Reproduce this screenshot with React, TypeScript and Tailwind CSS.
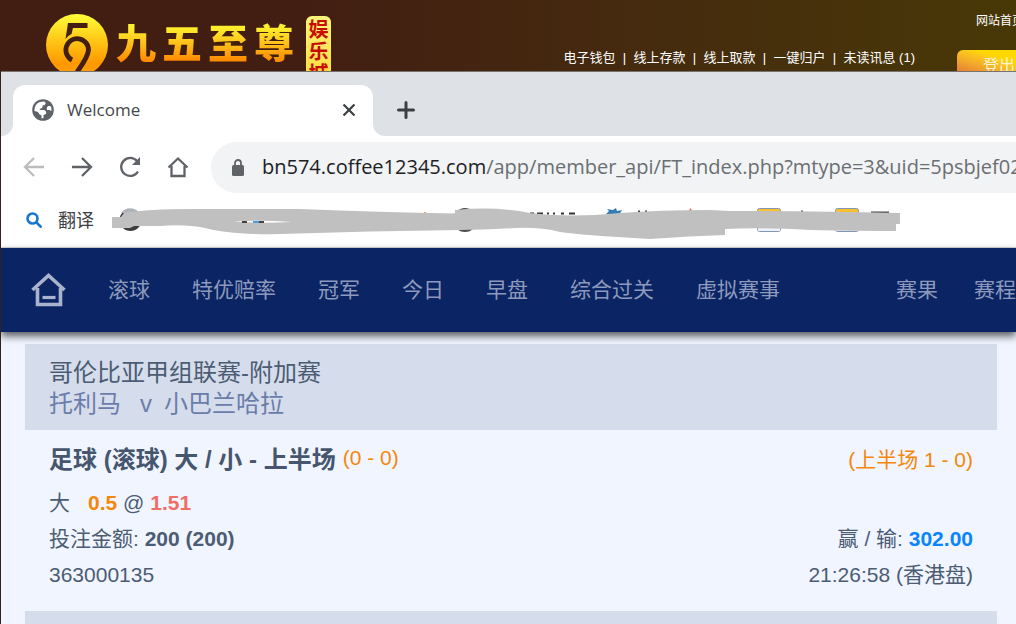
import type { ReactNode } from 'react';

const accountLinks = ['电子钱包', '线上存款', '线上取款', '一键归户', '未读讯息 (1)'];
const navLinks = ['滚球', '特优赔率', '冠军', '今日', '早盘', '综合过关', '虚拟赛事'];
const resultLinks = ['赛果', '赛程'];

const CJK = "font-['Liberation_Sans','Noto_Sans_CJK_SC',sans-serif]";
const CHROME = "font-['Open_Sans','Noto_Sans_CJK_SC',sans-serif]";

function Logo() {
	return (
		<div className="flex shrink-0 items-start pt-[14px] pl-[46px]">
			<svg className="h-[62px] w-[62px]" viewBox="0 0 62 62" aria-hidden="true">
				<defs>
					<linearGradient id="gold" x1="0" y1="0" x2="0" y2="1">
						<stop offset="0" stopColor="#ffff38" />
						<stop offset="0.45" stopColor="#ffc414" />
						<stop offset="0.8" stopColor="#ff9800" />
						<stop offset="1" stopColor="#ffa010" />
					</linearGradient>
				</defs>
				<circle cx="31" cy="31" r="31" fill="url(#gold)" />
				<path d="M41.500 9V14H27L25.500 20Q22 21.500 19.500 25L22 9Z" fill="#421f12" />
				<path d="M26 46A11.300 11.300 0 1 1 42.500 36Q42 43 31 58" fill="none" stroke="#421f12" strokeWidth="4.800" />
			</svg>
			<div className="mt-[2px] ml-2 flex gap-[6px] text-[40px] leading-[56px] font-black">
				{'九五至尊'.split('').map((char) => (
					<span key={char} className="bg-linear-to-b from-[#fff02c] from-20% to-[#ff8a00] to-80% bg-clip-text text-transparent">
						{char}
					</span>
				))}
			</div>
			<div className="mt-[2px] ml-3 flex w-[25px] flex-col items-center rounded-t-md bg-linear-to-b from-[#fff47a] to-[#ffd92e] pt-[3px] text-[20px] leading-[22px] font-bold text-[#c80d00]">
				{'娱乐城'.split('').map((char) => (
					<span key={char}>{char}</span>
				))}
			</div>
		</div>
	);
}

function SiteHeader() {
	return (
		<header className="flex h-[71px] shrink-0 justify-between overflow-hidden bg-linear-to-r from-[#421e12] from-30% to-[#483806] text-white">
			<Logo />
			<div className="-mr-[42px] flex shrink-0 flex-col items-end">
				<a href="#home" className="mt-[13px] mr-[34px] text-[12px] leading-4">网站首页</a>
				<div className="mt-[21px] flex items-start">
					<nav className="flex text-[13px] leading-4">
						{accountLinks.map((link, i) => (
							<span key={link} className="flex">
								{i > 0 && <span className="w-[18px] text-center">|</span>}
								<a href="#account">{link}</a>
							</span>
						))}
					</nav>
					<button className="ml-[42px] h-8 w-[101px] rounded-t-md bg-linear-to-tr from-[#d85a38] to-[#ffd800] to-60% pl-[26px] text-left text-[16px] leading-7 text-[#fff3d8]">
						登出
					</button>
				</div>
			</div>
		</header>
	);
}

function TabStrip() {
	return (
		<div className="flex h-16 shrink-0 items-end bg-[#dee1e6]">
			<div className="h-3 w-3 bg-white">
				<div className="h-3 w-3 rounded-br-xl bg-[#dee1e6]" />
			</div>
			<div className="flex h-[51px] w-[360px] items-center rounded-t-xl bg-white pr-[18px] pb-[2px] pl-[19px]">
				<svg className="h-[22px] w-[22px]" viewBox="0 0 22 22" aria-hidden="true">
					<circle cx="11" cy="11" r="10.800" fill="#5f6368" />
					<path d="M2.500 10.500Q3 4.500 8 3L12 2.500Q15 4 12.500 6L10.500 6.500Q11 9 8.500 9.500L7.500 11H12Q15 12 14 15L11.500 16V19L9.500 19.500V16.500L7 15Q7 12.500 2.500 12ZM16 7L18.500 7Q20 9 19.500 12L17.500 11H15Q14 9 16 7Z" fill="#fff" />
				</svg>
				<span className="ml-[13px] flex-1 text-[17px] text-[#45484c]">Welcome</span>
				<button aria-label="Close tab" className="text-[#3c4043]">
					<svg className="h-3 w-3" viewBox="0 0 12 12" stroke="currentColor" strokeWidth="2.200">
						<path d="M0.500 0.500L11.500 11.500M11.500 0.500L0.500 11.500" />
					</svg>
				</button>
			</div>
			<div className="h-3 w-3 bg-white">
				<div className="h-3 w-3 rounded-bl-xl bg-[#dee1e6]" />
			</div>
			<button aria-label="New tab" className="mb-[17px] ml-3 text-[#3c4043]">
				<svg className="h-[18px] w-[18px]" viewBox="0 0 18 18" stroke="currentColor" strokeWidth="3" strokeLinecap="round">
					<path d="M9 1.500V16.500M1.500 9H16.500" />
				</svg>
			</button>
		</div>
	);
}

function ToolButton({ label, children }: { label: string; children: ReactNode }) {
	return (
		<button aria-label={label}>
			<svg className="h-6 w-6" viewBox="0 0 24 24" fill="none" stroke="currentColor" strokeWidth="2.300">
				{children}
			</svg>
		</button>
	);
}

function Toolbar() {
	return (
		<div className="flex h-[60px] shrink-0 items-center gap-6 overflow-hidden pt-[2px] pl-[21px] text-[#5f6368]">
			<span className="flex text-[#babcbe]">
				<ToolButton label="Back">
					<path d="M22 12H3M12 3L3 12L12 21" />
				</ToolButton>
			</span>
			<ToolButton label="Forward">
				<path d="M2 12H21M12 3L21 12L12 21" />
			</ToolButton>
			<ToolButton label="Reload">
				<path d="M20 16.500A9 9 0 1 1 19 6" />
				<path d="M22 2V10H14Z" fill="currentColor" stroke="none" />
			</ToolButton>
			<ToolButton label="Home">
				<path d="M2.500 12.500L12 3.500L21.500 12.500M5.500 11V21H18.500V11" />
			</ToolButton>
			<label className="-ml-[3px] flex h-[51px] flex-1 items-center rounded-l-full bg-[#f1f3f4] pl-[21px] text-[20px]">
				<svg className="h-[17px] w-3 shrink-0" viewBox="0 0 12 17" fill="none" aria-hidden="true">
					<rect y="6" width="12" height="11" rx="1.500" fill="#5f6368" />
					<path d="M3 7V4A3 3 0 0 1 9 4V7" stroke="#5f6368" strokeWidth="1.800" />
				</svg>
				<span className="ml-[18px] text-[#202124]">bn574.coffee12345.com</span>
				<input
					aria-label="Address"
					defaultValue="/app/member_api/FT_index.php?mtype=3&uid=5psbjef02"
					className="min-w-0 flex-1 bg-transparent text-[#6b6f73] outline-none"
				/>
			</label>
		</div>
	);
}

function BookmarksBar() {
	return (
		<div className="flex h-[52px] shrink-0 items-start border-b border-[#d6d8dc] pl-[25px]">
			<a href="#translate" className="flex h-12 items-center gap-4 text-[18px] text-[#3c4043]">
				<svg className="h-4 w-4" viewBox="0 0 16 16" fill="none" stroke="#1a75cf" strokeWidth="2.600" aria-hidden="true">
					<circle cx="6.500" cy="6.500" r="5" />
					<path d="M10 10L15.500 15.500" />
				</svg>
				翻译
			</a>
			<svg className="ml-[18px] h-[52px] w-[790px] shrink-0" viewBox="112 196 790 52" aria-hidden="true">
				<circle cx="130.500" cy="220" r="11" fill="#3d3d3d" />
				<path d="M121 213A11 11 0 0 1 139 213Z" fill="#aeb3b8" />
				<circle cx="465" cy="220" r="12" fill="#4c4c4c" />
				<path d="M530 213.500H534M537 213.500H543M547 213.500H549M553 213.500H555M561 213.500H564M569 213.500H575M638 211.500H640M645 211.500H647" stroke="#333" strokeWidth="2" />
				<path d="M606 214L609 211L607 209L613 210L616 208L617 211L622 210L619 215Z" fill="#347db4" />
				<path d="M688 212L690.500 208L693 212Z" fill="#f16d6d" />
				<rect x="757.500" y="208.500" width="23" height="23" rx="2" fill="#fbc02d" stroke="#8197b8" />
				<rect x="835.500" y="208.500" width="23" height="23" rx="2" fill="#fbc02d" stroke="#8197b8" />
				<path d="M758 228H780V231H758ZM836 228H858V231H836Z" fill="#edf1f8" />
				<path d="M871 212.500H889M801 211.500H803" stroke="#444" strokeWidth="2" />
				<path d="M424 212.500H426" stroke="#e7a13f" />
				<path
					d="M112 217H121L124 213Q150 209 190 209H300Q380 212 455 213.500V210Q495 206 530 213Q570 218 620 213Q660 210 710 210L730 211Q810 211 900 213V224H896V231Q860 231 810 230Q760 227 725 229V235Q690 236 650 239Q580 235 560 232Q540 227 515 228Q480 230 460 230Q370 231 280 234Q230 235 205 228Q185 224 160 226H134L130 228H112Z"
					fill="#c0c0c0"
				/>
				<path d="M234 221.500Q260 220 292 222Q260 223.500 234 221.500Z" fill="#fff" />
				<path d="M242 222H247M259 222H264" stroke="#444" strokeWidth="2" />
				<path d="M253 222H259" stroke="#4d9cd8" strokeWidth="2" />
			</svg>
		</div>
	);
}

function SiteNav() {
	return (
		<nav className="relative z-10 flex h-[84px] shrink-0 items-center justify-between bg-[#0b2463] text-[21px] text-[#8d9abd] shadow-[0_4px_8px_rgba(0,0,0,0.65)]">
			<div className="flex items-center gap-[42px] pl-[29px]">
				<a href="#top" aria-label="首页">
					<svg className="h-9 w-9" viewBox="0 0 36 36" fill="none" stroke="#a9b3cd" strokeWidth="3.600" aria-hidden="true">
						<path d="M2.500 18L18.500 3.500L34.500 18" />
						<path d="M7.500 16V32.500H30.500V16" />
						<path d="M12.500 25.500H25.500" strokeWidth="3.200" />
					</svg>
				</a>
				{navLinks.map((link) => (
					<a key={link} href="#sport" className="shrink-0">{link}</a>
				))}
			</div>
			<div className="flex shrink-0 gap-9">
				{resultLinks.map((link) => (
					<a key={link} href="#results" className="shrink-0">{link}</a>
				))}
			</div>
		</nav>
	);
}

function BetSlip() {
	return (
		<main className="flex-1 bg-[#f0f5ff] pt-3 pr-[19px] pl-6 text-[21px] leading-9 text-[#4c5c73]">
			<section>
				<div className="bg-[#d5dceb] px-6 pt-[13px] pb-[11px] text-[24px] leading-[31px]">
					<h2>哥伦比亚甲组联赛-附加赛</h2>
					<p className="flex text-[#6b7caa]">
						<span>托利马</span>
						<span className="mr-3 ml-[19px]">v</span>
						<span>小巴兰哈拉</span>
					</p>
				</div>
				<div className="px-6 pt-3 pb-[18px]">
					<div className="flex items-center justify-between">
						<h3 className="flex items-start gap-[7px] text-[24px] font-bold text-[#46566e]">
							足球 (滚球) 大 / 小 - 上半场
							<span className="text-[21px] leading-8 font-normal text-[#f5870a]">(0 - 0)</span>
						</h3>
						<span className="text-[#f5870a]">(上半场 1 - 0)</span>
					</div>
					<p className="mt-[7px]">
						<span className="mr-[18px]">大</span>
						<b className="text-[#f5870a]">0.5</b> @ <b className="text-[#f16e67]">1.51</b>
					</p>
					<div className="flex justify-between">
						<p>投注金额: <b>200 (200)</b></p>
						<p>赢 / 输: <b className="text-[#0a84ff]">302.00</b></p>
					</div>
					<div className="flex justify-between">
						<p>363000135</p>
						<p>21:26:58 (香港盘)</p>
					</div>
				</div>
			</section>
			<section className="h-24 bg-[#d5dceb]" />
		</main>
	);
}

export default function App() {
	return (
		<div className={`flex h-screen flex-col overflow-hidden bg-[#35201b] ${CJK}`}>
			<SiteHeader />
			<div className="ml-px flex min-h-0 flex-1 flex-col overflow-hidden border-t border-[#77736f] bg-white">
				<div className={`flex shrink-0 flex-col ${CHROME}`}>
					<TabStrip />
					<Toolbar />
					<BookmarksBar />
				</div>
				<SiteNav />
				<BetSlip />
			</div>
		</div>
	);
}
